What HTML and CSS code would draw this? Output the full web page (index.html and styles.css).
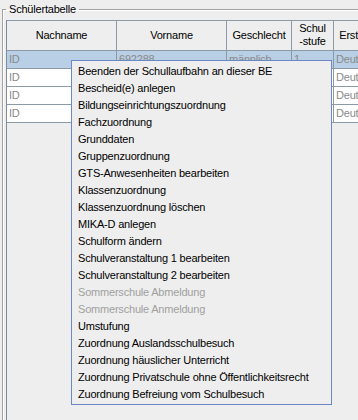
FILE: index.html
```html
<!DOCTYPE html>
<html lang="de">
<head>
    <meta charset="UTF-8">
    <meta name="viewport" content="width=device-width, initial-scale=1.0">
    <title>Schülertabelle</title>
    <link rel="stylesheet" href="styles.css">
</head>
<body>
    <fieldset class="group">
        <legend>Schülertabelle</legend>
        <div class="pane">
            <div class="row head">
                <div class="cell">Nachname</div>
                <div class="cell">Vorname</div>
                <div class="cell">Geschlecht</div>
                <div class="cell">Schul<br>-stufe</div>
                <div class="cell">Erstsprache</div>
            </div>
            <div class="row selected">
                <div class="cell">ID</div>
                <div class="cell">692288</div>
                <div class="cell">männlich</div>
                <div class="cell">1</div>
                <div class="cell">Deutsch</div>
            </div>
            <div class="row">
                <div class="cell">ID</div>
                <div class="cell">692289</div>
                <div class="cell">weiblich</div>
                <div class="cell">1</div>
                <div class="cell">Deutsch</div>
            </div>
            <div class="row">
                <div class="cell">ID</div>
                <div class="cell">692290</div>
                <div class="cell">männlich</div>
                <div class="cell">1</div>
                <div class="cell">Deutsch</div>
            </div>
            <div class="row">
                <div class="cell">ID</div>
                <div class="cell">692291</div>
                <div class="cell">weiblich</div>
                <div class="cell">1</div>
                <div class="cell">Deutsch</div>
            </div>
        </div>
    </fieldset>

    <!-- Kontextmenü über der Tabelle -->
    <ul class="menu">
        <li>Beenden der Schullaufbahn an dieser BE</li>
        <li>Bescheid(e) anlegen</li>
        <li>Bildungseinrichtungszuordnung</li>
        <li>Fachzuordnung</li>
        <li>Grunddaten</li>
        <li>Gruppenzuordnung</li>
        <li>GTS-Anwesenheiten bearbeiten</li>
        <li>Klassenzuordnung</li>
        <li>Klassenzuordnung löschen</li>
        <li>MIKA-D anlegen</li>
        <li>Schulform ändern</li>
        <li>Schulveranstaltung 1 bearbeiten</li>
        <li>Schulveranstaltung 2 bearbeiten</li>
        <li class="disabled">Sommerschule Abmeldung</li>
        <li class="disabled">Sommerschule Anmeldung</li>
        <li>Umstufung</li>
        <li>Zuordnung Auslandsschulbesuch</li>
        <li>Zuordnung häuslicher Unterricht</li>
        <li>Zuordnung Privatschule ohne Öffentlichkeitsrecht</li>
        <li>Zuordnung Befreiung vom Schulbesuch</li>
    </ul>
</body>
</html>
```

FILE: styles.css
```css
body {
    margin: 0;
    background: #eeeeee;
    font-family: 'Liberation Sans', Arial, sans-serif;
    font-size: 11px;
    letter-spacing: -0.2px;
    color: #000;
    width: 358px;
    height: 420px;
    overflow: hidden;
    position: relative;
}
.group {
    margin: 2px 0 0 2px;
    padding: 4px 0 0 3px;
    width: 370px;
    height: 430px;
    border: 1px solid #a3a3a3;
    box-shadow: inset 1px 1px 0 #fff;
    box-sizing: border-box;
}
.group legend {
    padding: 0 3px;
    line-height: 14px;
}
.pane {
    border-left: 1px solid #7d8c9c;
    border-top: 1px solid #8c99a6;
    height: 410px;
    overflow: hidden;
}
.row {
    display: grid;
    grid-template-columns: 110px 110px 65px 42px 68px;
}
.cell {
    border-right: 1px solid #8c99a6;
    border-bottom: 1px solid #8c99a6;
    height: 18px;
    line-height: 17px;
    padding-left: 2px;
    box-sizing: border-box;
    white-space: nowrap;
    overflow: hidden;
    color: #8a8a8a;
    background: #fff;
}
.head .cell {
    height: 30px;
    display: flex;
    align-items: center;
    justify-content: center;
    text-align: center;
    line-height: 13px;
    padding: 0 0 1px;
    color: #000;
    background: #eeeeee;
}
.selected .cell {
    background: #b8cfe5;
}
.menu {
    position: absolute;
    left: 71px;
    top: 60px;
    width: 261px;
    margin: 0;
    padding: 2px 0 1px;
    list-style: none;
    background: #eeeeee;
    border: 1px solid #6a88c4;
    box-sizing: border-box;
}
.menu li {
    height: 17px;
    line-height: 17px;
    padding-left: 6px;
    white-space: nowrap;
}
.menu .disabled {
    color: #a0a0a0;
}
```
